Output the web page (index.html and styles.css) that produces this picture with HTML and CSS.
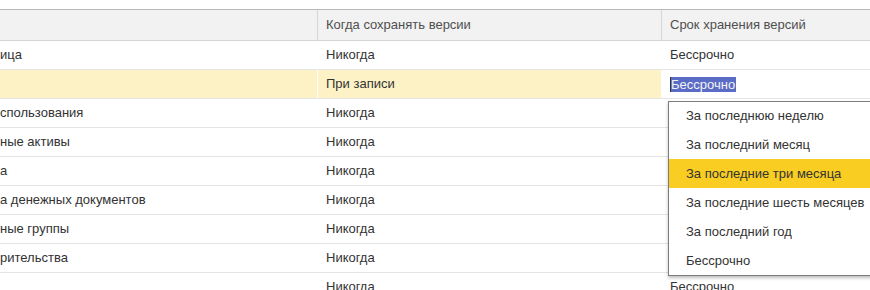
FILE: index.html
```html
<!DOCTYPE html>
<html lang="ru">
<head>
<meta charset="utf-8">
<link rel="stylesheet" href="styles.css">
</head>
<body>
<div class="page">
  <div class="grid">
    <div class="row head">
      <div class="cell c1"></div>
      <div class="cell c2">Когда сохранять версии</div>
      <div class="cell c3">Срок хранения версий</div>
    </div>
    <div class="row">
      <div class="cell c1 cut">ица</div>
      <div class="cell c2">Никогда</div>
      <div class="cell c3">Бессрочно</div>
    </div>
    <div class="row current">
      <div class="cell c1"></div>
      <div class="cell c2">При записи</div>
      <div class="cell c3 edit"><span class="caret"></span><span class="sel">Бессрочно</span></div>
    </div>
    <div class="row">
      <div class="cell c1 cut">спользования</div>
      <div class="cell c2">Никогда</div>
      <div class="cell c3"></div>
    </div>
    <div class="row">
      <div class="cell c1 cut">ные активы</div>
      <div class="cell c2">Никогда</div>
      <div class="cell c3"></div>
    </div>
    <div class="row">
      <div class="cell c1 cut">а</div>
      <div class="cell c2">Никогда</div>
      <div class="cell c3"></div>
    </div>
    <div class="row">
      <div class="cell c1 cut">а денежных документов</div>
      <div class="cell c2">Никогда</div>
      <div class="cell c3"></div>
    </div>
    <div class="row">
      <div class="cell c1 cut">ные группы</div>
      <div class="cell c2">Никогда</div>
      <div class="cell c3"></div>
    </div>
    <div class="row">
      <div class="cell c1 cut">рительства</div>
      <div class="cell c2">Никогда</div>
      <div class="cell c3"></div>
    </div>
    <div class="row">
      <div class="cell c1"></div>
      <div class="cell c2">Никогда</div>
      <div class="cell c3">Бессрочно</div>
    </div>
  </div>

  <ul class="dropdown">
    <li>За последнюю неделю</li>
    <li>За последний месяц</li>
    <li class="hl">За последние три месяца</li>
    <li>За последние шесть месяцев</li>
    <li>За последний год</li>
    <li>Бессрочно</li>
  </ul>
</div>
</body>
</html>
```
FILE: styles.css
```css
html, body {
  margin: 0;
  padding: 0;
  width: 870px;
  height: 290px;
  overflow: hidden;
  background: #fff;
}

.page {
  position: relative;
  width: 870px;
  height: 290px;
  padding-top: 9px;
  box-sizing: border-box;
  font-family: "Liberation Sans", Arial, sans-serif;
  font-size: 13px;
  color: #333;
}

.grid {
  border-top: 1px solid #b8b8b8;
}

.row {
  display: grid;
  grid-template-columns: 318px 344px 1fr;
  height: 28px;
  border-bottom: 1px solid #e4e4e4;
}

.row.head {
  height: 30px;
  background: #f2f2f2;
  border-bottom: 1px solid #d4d4d4;
  color: #4f4f4f;
}

.cell {
  line-height: 28px;
  padding-left: 8px;
  white-space: nowrap;
  overflow: hidden;
}

.head .cell {
  line-height: 30px;
}

.c1, .c2 {
  border-right: 1px solid #fff;
}

.head .c1, .head .c2 {
  border-right: 1px solid #d6d6d6;
}

.cell.cut {
  padding-left: 0;
}

.row.current .c1,
.row.current .c2 {
  background: #fdf1c6;
}

.edit {
  display: flex;
  align-items: center;
}

.caret {
  width: 1px;
  height: 15px;
  background: #333;
}

.sel {
  background: #5a6cc6;
  color: #f4f4f4;
  line-height: 15px;
  padding-right: 1px;
}

.dropdown {
  position: absolute;
  left: 668px;
  top: 101px;
  width: 220px;
  margin: 0;
  padding: 0;
  list-style: none;
  background: #fff;
  border: 1px solid #7d7d7d;
  box-shadow: 0 2px 3px rgba(0, 0, 0, 0.25);
}

.dropdown li {
  height: 29px;
  line-height: 29px;
  padding-left: 17px;
  color: #333;
  white-space: nowrap;
}

.dropdown li:first-child {
  height: 28px;
  line-height: 28px;
}

.dropdown li.hl {
  background: #f9cd22;
}
```
